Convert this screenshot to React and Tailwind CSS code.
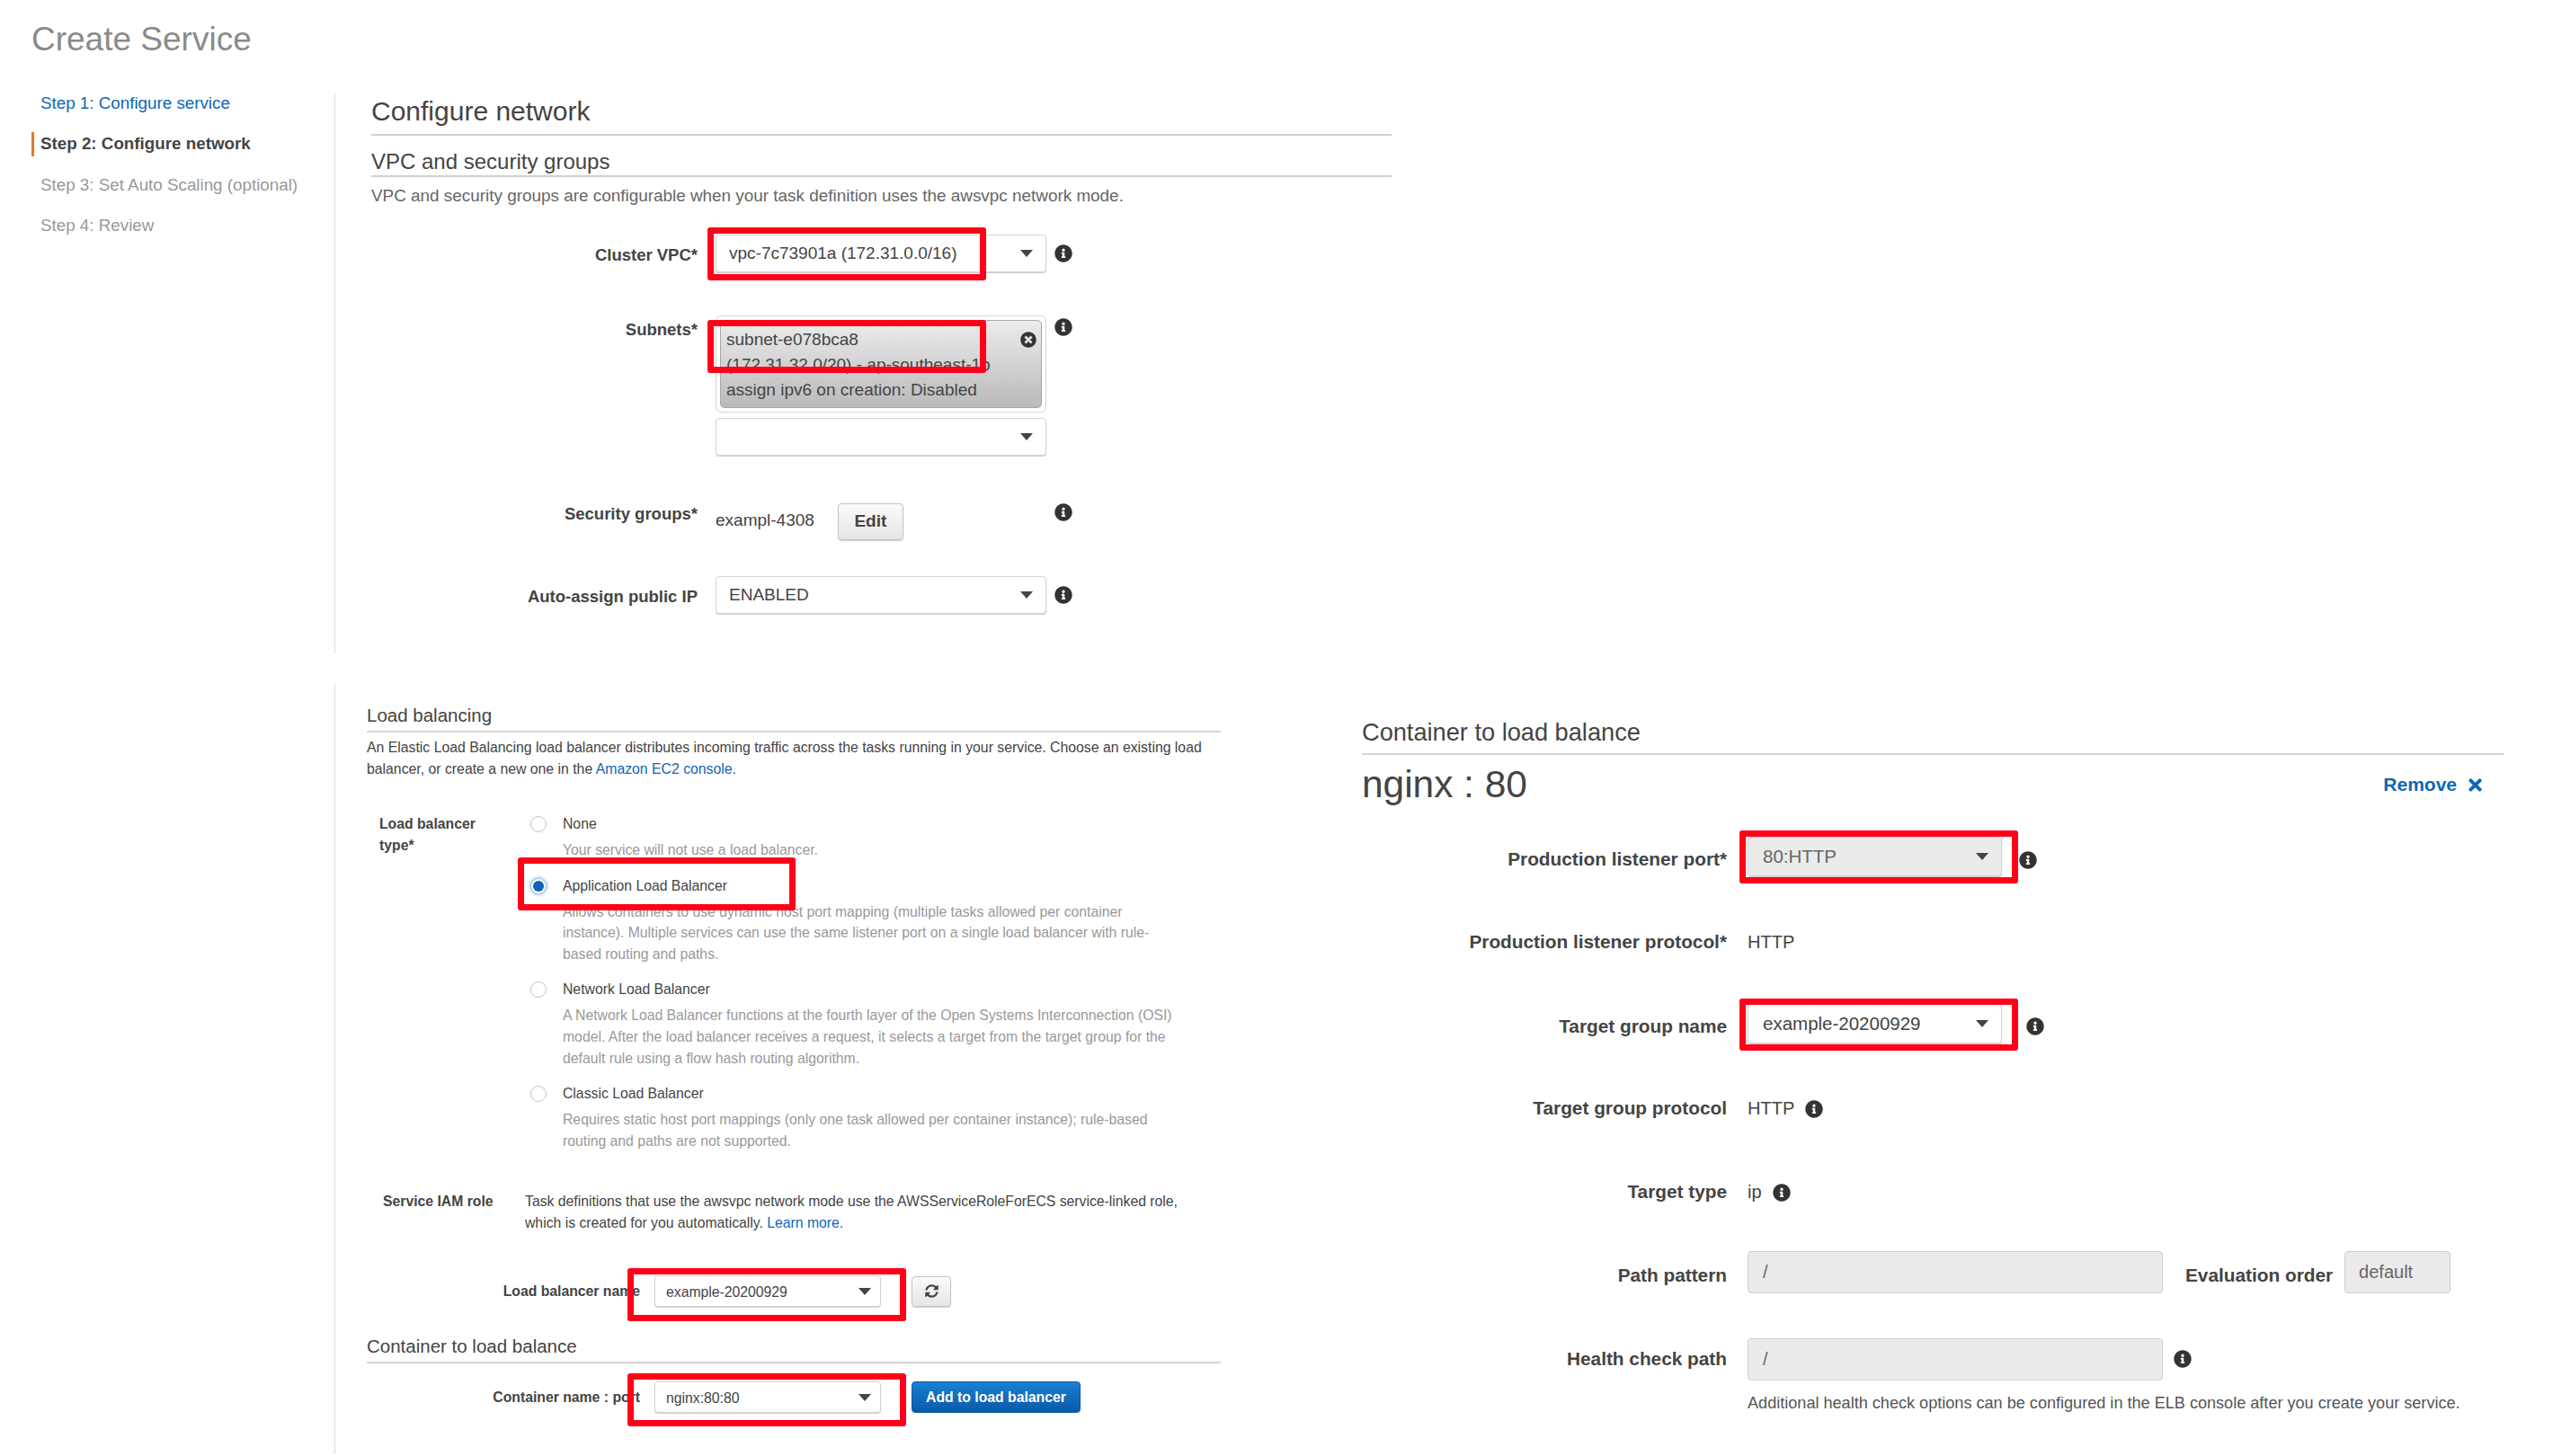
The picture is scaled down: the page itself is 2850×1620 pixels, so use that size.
import React from "react";
import { FaInfoCircle, FaTimesCircle, FaSyncAlt, FaTimes } from "react-icons/fa";

function Info({ className }) {
  return (
    <span className={"h-[18px] w-[18px] shrink-0 " + (className || "")}>
      <FaInfoCircle className="-m-px text-[#333]" size={20} />
    </span>
  );
}

function Caret() {
  return (
    <svg width="14" height="8" viewBox="0 0 14 8" className="shrink-0">
      <path d="M0 0H14L7 8Z" fill="#444" />
    </svg>
  );
}

function Select({ value, className, disabled }) {
  return (
    <div
      className={
        "flex items-center justify-between rounded-[4px] border border-[#d4d4d4] shadow-[0_1px_1px_rgba(0,0,0,0.2)] " +
        (disabled ? "bg-[#ebebeb] text-[#666] " : "bg-white text-[#444] ") +
        className
      }
    >
      <span className="whitespace-nowrap pt-[1px]">{value}</span>
      <Caret />
    </div>
  );
}

function Radio({ on }) {
  if (on) {
    return (
      <span className="mt-[3px] flex h-[18px] w-[18px] shrink-0 items-center justify-center rounded-full border border-[#9cc4ea] bg-white shadow-[0_0_4px_rgba(20,110,190,0.6)]">
        <span className="h-[12px] w-[12px] rounded-full bg-[#0f62b4]" />
      </span>
    );
  }
  return <span className="mt-[3px] h-[18px] w-[18px] shrink-0 rounded-full border border-[#c4c4c4] bg-white" />;
}

function Choice({ on, label, children }) {
  return (
    <div className="flex gap-[18px]">
      <Radio on={on} />
      <div className="text-[15.75px] leading-[24px]">
        <div className="text-[#444]">{label}</div>
        <div className="mt-[5px] whitespace-nowrap leading-[23.6px] text-[#999]">{children}</div>
      </div>
    </div>
  );
}

function TopLabel({ children, className }) {
  return (
    <div className={"w-[363px] shrink-0 text-right text-[18.5px] font-bold leading-[28px] text-[#444] " + className}>
      {children}
    </div>
  );
}

function RightLabel({ children, className }) {
  return (
    <div className={"w-[406px] shrink-0 text-right text-[20.8px] font-bold leading-[28px] text-[#444] " + className}>
      {children}
    </div>
  );
}

function Red({ className }) {
  return <div className={"absolute rounded-[3px] border-[7px] border-[#ff0019] " + className} />;
}

export default function App() {
  return (
    <div className="relative h-[1620px] w-[2850px] overflow-hidden bg-white font-['Liberation_Sans',sans-serif]">
      <div className="h-[92px] pl-[35px] pt-[22px] text-[37px] leading-[44px] text-[#8a8a8a]">Create Service</div>

      <div className="flex h-[635px]">
        <nav className="w-[372px] shrink-0 text-[18.8px]">
          <div className="flex h-[45.5px] items-center pl-[45px] text-[#0f66b5]">Step 1: Configure service</div>
          <div className="flex h-[45.5px] items-center">
            <span className="ml-[35px] h-[27px] w-[3px] bg-[#e07b2c]" />
            <span className="pl-[7px] font-bold text-[#444]">Step 2: Configure network</span>
          </div>
          <div className="flex h-[45.5px] items-center pl-[45px] text-[#999]">Step 3: Set Auto Scaling (optional)</div>
          <div className="flex h-[45.5px] items-center pl-[45px] text-[#999]">Step 4: Review</div>
        </nav>

        <main className="mt-[13px] w-[1176px] border-l border-[#dddddd] pl-[40px]">
          <div className="border-b-2 border-[#cfcfcf] pb-[7px] pt-[1px] text-[30px] leading-[36px] text-[#444]">Configure network</div>
          <div className="mt-[14px] border-b-2 border-[#cfcfcf] text-[24px] leading-[30px] text-[#444]">VPC and security groups</div>
          <p className="mt-[9px] text-[18.9px] leading-[24px] text-[#666]">
            VPC and security groups are configurable when your task definition uses the awsvpc network mode.
          </p>

          <div className="mt-[31px] flex gap-[20px]">
            <TopLabel className="pt-[9px]">Cluster VPC*</TopLabel>
            <Select value="vpc-7c73901a (172.31.0.0/16)" className="h-[42px] w-[368px] pl-[14px] pr-[14px] text-[19px]" />
            <Info className="-ml-[10px] mt-[12px]" />
          </div>

          <div className="mt-[48px] flex gap-[20px]">
            <TopLabel className="pt-[2px]">Subnets*</TopLabel>
            <div className="w-[368px]">
              <div className="h-[108px] rounded-[6px] border border-[#d4d4d4] p-[4px]">
                <div className="relative h-[98px] rounded-[5px] border border-[#a8a8a8] bg-linear-to-b from-[#ececec] to-[#bababa] pl-[6px] pt-[7px] text-[19px] leading-[28px] text-[#444]">
                  <div>subnet-e078bca8</div>
                  <div className="whitespace-nowrap">(172.31.32.0/20) - ap-southeast-1b</div>
                  <div>assign ipv6 on creation: Disabled</div>
                  <FaTimesCircle className="absolute right-[5px] top-[12px] text-[#333]" size={18} />
                </div>
              </div>
              <Select value="" className="mt-[6px] h-[42px] w-[368px] pl-[15px] pr-[14px] text-[19px]" />
            </div>
            <Info className="-ml-[10px] mt-[4px]" />
          </div>

          <div className="mt-[51px] flex gap-[20px]">
            <TopLabel>Security groups*</TopLabel>
            <div className="flex w-[368px] items-start">
              <span className="pt-[7px] text-[19px] leading-[28px] text-[#444]">exampl-4308</span>
              <button className="ml-[26px] mt-[2px] h-[41px] w-[73px] rounded-[4px] border border-[#c4c4c4] bg-linear-to-b from-[#fafafa] to-[#e6e6e6] text-[19px] font-bold text-[#444] shadow-[0_1px_1px_rgba(0,0,0,0.2)]">
                Edit
              </button>
            </div>
            <Info className="-ml-[10px] mt-[3px]" />
          </div>

          <div className="mt-[40px] flex gap-[20px]">
            <TopLabel className="pt-[9px]">Auto-assign public IP</TopLabel>
            <Select value="ENABLED" className="h-[42px] w-[368px] pl-[14px] pr-[14px] text-[19px]" />
            <Info className="-ml-[10px] mt-[12px]" />
          </div>
        </main>
      </div>

      <div className="mt-[33px] flex items-start">
        <section className="ml-[372px] h-[858px] w-[1143px] shrink-0 border-l border-[#dddddd] pl-[35px]">
          <div className="w-[950px]">
            <div className="mt-[21px] border-b-2 border-[#d4d4d4] pb-[2px] text-[20.5px] leading-[30px] text-[#444]">Load balancing</div>
            <p className="mt-[5px] whitespace-nowrap text-[15.8px] leading-[24px] text-[#444]">
              An Elastic Load Balancing load balancer distributes incoming traffic across the tasks running in your service. Choose an existing load
              <br />
              balancer, or create a new one in the <span className="text-[#0f66b5]">Amazon EC2 console.</span>
            </p>

            <div className="mt-[37px] flex pl-[14px]">
              <div className="w-[168px] shrink-0 text-[15.75px] font-bold leading-[24px] text-[#444]">
                Load balancer
                <br />
                type*
              </div>
              <div className="flex flex-col gap-[16px]">
                <Choice label="None">Your service will not use a load balancer.</Choice>
                <Choice on label="Application Load Balancer">
                  Allows containers to use dynamic host port mapping (multiple tasks allowed per container
                  <br />
                  instance). Multiple services can use the same listener port on a single load balancer with rule-
                  <br />
                  based routing and paths.
                </Choice>
                <Choice label="Network Load Balancer">
                  A Network Load Balancer functions at the fourth layer of the Open Systems Interconnection (OSI)
                  <br />
                  model. After the load balancer receives a request, it selects a target from the target group for the
                  <br />
                  default rule using a flow hash routing algorithm.
                </Choice>
                <Choice label="Classic Load Balancer">
                  Requires static host port mappings (only one task allowed per container instance); rule-based
                  <br />
                  routing and paths are not supported.
                </Choice>
              </div>
            </div>

            <div className="mt-[44px] flex pl-[18px]">
              <div className="w-[158px] shrink-0 text-[15.75px] font-bold leading-[24px] text-[#444]">Service IAM role</div>
              <p className="whitespace-nowrap text-[15.75px] leading-[24px] text-[#444]">
                Task definitions that use the awsvpc network mode use the AWSServiceRoleForECS service-linked role,
                <br />
                which is created for you automatically. <span className="text-[#0f66b5]">Learn more.</span>
              </p>
            </div>

            <div className="mt-[46px] flex items-center gap-[16px]">
              <div className="w-[304px] shrink-0 text-right text-[15.75px] font-bold text-[#444]">Load balancer name</div>
              <Select value="example-20200929" className="h-[35px] w-[252px] pl-[12px] pr-[10px] text-[15.75px]" />
              <button className="ml-[18px] flex h-[34px] w-[44px] items-center justify-center rounded-[4px] border border-[#c4c4c4] bg-linear-to-b from-[#fafafa] to-[#e6e6e6] shadow-[0_1px_1px_rgba(0,0,0,0.2)]">
                <FaSyncAlt className="text-[#444]" size={15} />
              </button>
            </div>

            <div className="mt-[29px] border-b-2 border-[#d4d4d4] pb-[2px] text-[20.5px] leading-[30px] text-[#444]">Container to load balance</div>
            <div className="mt-[20px] flex items-center gap-[16px]">
              <div className="w-[304px] shrink-0 text-right text-[15.75px] font-bold text-[#444]">Container name : port</div>
              <Select value="nginx:80:80" className="h-[35px] w-[252px] pl-[12px] pr-[10px] text-[15.75px]" />
              <button className="ml-[18px] -mt-[1px] h-[35px] w-[188px] rounded-[4px] border border-[#0a5aa8] bg-linear-to-b from-[#1b80d2] to-[#0a5aa8] text-[15.75px] font-bold text-white">
                Add to load balancer
              </button>
            </div>
          </div>
        </section>

        <section className="w-[1270px]">
          <div className="mt-[37px] border-b-2 border-[#d4d4d4] pb-[5px] text-[27.2px] leading-[36px] text-[#444]">Container to load balance</div>
          <div className="mt-[8px] flex h-[50px] items-center justify-between">
            <span className="text-[42.4px] leading-[50px] text-[#444]">nginx : 80</span>
            <span className="mr-[21px] flex items-center gap-[10px] text-[21px] font-bold text-[#0f66b5]">
              Remove
              <FaTimes size={21} />
            </span>
          </div>

          <div className="mt-[33px] flex gap-[23px]">
            <RightLabel className="pt-[11px]">Production listener port*</RightLabel>
            <Select disabled value="80:HTTP" className="h-[44px] w-[283px] pl-[16px] pr-[14px] text-[20.5px]" />
            <Info className="-ml-[3px] mt-[17px]" />
          </div>

          <div className="mt-[59px] flex gap-[23px]">
            <RightLabel>Production listener protocol*</RightLabel>
            <span className="text-[20px] leading-[28px] text-[#444]">HTTP</span>
          </div>

          <div className="mt-[55px] flex gap-[23px]">
            <RightLabel className="pt-[11px]">Target group name</RightLabel>
            <Select value="example-20200929" className="h-[44px] w-[283px] pl-[16px] pr-[14px] text-[20.5px]" />
            <Info className="ml-[5px] mt-[16px]" />
          </div>

          <div className="mt-[58px] flex gap-[23px]">
            <RightLabel>Target group protocol</RightLabel>
            <span className="text-[20px] leading-[28px] text-[#444]">HTTP</span>
            <Info className="-ml-[10px] mt-[6px]" />
          </div>

          <div className="mt-[65px] flex gap-[23px]">
            <RightLabel>Target type</RightLabel>
            <span className="text-[20px] leading-[28px] text-[#444]">ip</span>
            <Info className="-ml-[10px] mt-[6px]" />
          </div>

          <div className="mt-[52px] flex gap-[23px]">
            <RightLabel className="pt-[13px]">Path pattern</RightLabel>
            <div className="h-[47px] w-[462px] rounded-[4px] border border-[#cfcfcf] bg-[#ebebeb] pl-[16px] text-[20px] leading-[44px] text-[#666]">/</div>
            <div className="ml-[2px] pt-[13px] text-[20.8px] font-bold leading-[28px] text-[#444]">Evaluation order</div>
            <div className="-ml-[10px] h-[47px] w-[118px] rounded-[4px] border border-[#cfcfcf] bg-[#ebebeb] pl-[15px] text-[20px] leading-[44px] text-[#666]">default</div>
          </div>

          <div className="mt-[50px] flex gap-[23px]">
            <RightLabel className="pt-[9px]">Health check path</RightLabel>
            <div className="h-[47px] w-[462px] rounded-[4px] border border-[#cfcfcf] bg-[#ebebeb] pl-[16px] text-[20px] leading-[44px] text-[#666]">/</div>
            <Info className="-ml-[10px] mt-[14px]" />
          </div>

          <p className="ml-[429px] mt-[13px] whitespace-nowrap text-[18.1px] leading-[24px] text-[#555]">
            Additional health check options can be configured in the ELB console after you create your service.
          </p>
        </section>
      </div>

      <Red className="left-[787px] top-[253px] h-[59px] w-[310px]" />
      <Red className="left-[787px] top-[356px] h-[59px] w-[310px]" />
      <Red className="left-[576px] top-[954px] h-[59px] w-[309px]" />
      <Red className="left-[698px] top-[1411px] h-[59px] w-[310px]" />
      <Red className="left-[698px] top-[1528px] h-[59px] w-[310px]" />
      <Red className="left-[1935px] top-[924px] h-[59px] w-[310px]" />
      <Red className="left-[1935px] top-[1111px] h-[58px] w-[310px]" />
    </div>
  );
}
